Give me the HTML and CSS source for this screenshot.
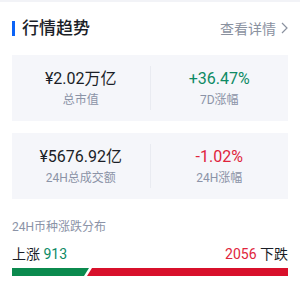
FILE: index.html
```html
<!DOCTYPE html>
<html>
<head>
	<meta charset="utf-8"/>
	<title>行情趋势</title>
	<link rel="stylesheet" href="styles.css">
</head>
<body>
<div class="topline"></div>
<div class="market">
	<div class="heading">
		<h3 class="title">行情趋势</h3>
		<a class="more" href="#">查看详情 <span class="chev"><svg width="7" height="12" viewBox="0 0 7 12"><path d="M1 1l5 5-5 5" fill="none" stroke="#8a919f" stroke-width="1.2"/></svg></span></a>
	</div>

	<div class="card">
		<div class="cell">
			<div class="val">¥2.02万亿</div>
			<div class="lbl">总市值</div>
		</div>
		<div class="sep"></div>
		<div class="cell">
			<div class="val up">+36.47%</div>
			<div class="lbl">7D涨幅</div>
		</div>
	</div>

	<div class="card">
		<div class="cell">
			<div class="val">¥5676.92亿</div>
			<div class="lbl">24H总成交额</div>
		</div>
		<div class="sep"></div>
		<div class="cell">
			<div class="val down">-1.02%</div>
			<div class="lbl">24H涨幅</div>
		</div>
	</div>

	<div class="dist">24H币种涨跌分布</div>
	<div class="counts">
		<span>上涨 <em class="up">913</em></span>
		<span><em class="down">2056</em> 下跌</span>
	</div>
	<div class="bar">
		<div class="bgreen" style="width: 77px;"></div>
		<div class="bred"></div>
	</div>
</div>
</body>
</html>
```

FILE: styles.css
```css
body{
	margin: 0;
	background: #fff;
	font-family: "Roboto", "Noto Sans CJK SC", sans-serif;
	color: #1b1e27;
}
.topline{
	height: 2px;
	background: #f2f3f7;
}
.market{
	padding: 0 12px;
}
.heading{
	display: flex;
	justify-content: space-between;
	align-items: center;
	margin-top: 14px;
	height: 24px;
}
.title{
	margin: 0;
	font-size: 17px;
	font-weight: 500;
	line-height: 24px;
	border-left: 3px solid #0b63f6;
	padding-left: 7px;
	height: 15px;
	display: flex;
	align-items: center;
}
.more{
	color: #8a919f;
	font-size: 14px;
	text-decoration: none;
	display: flex;
	align-items: center;
}
.chev{
	margin-left: 5px;
	display: flex;
}
.card{
	display: grid;
	grid-template-columns: 1fr 1px 1fr;
	align-items: center;
	height: 66px;
	background: #f5f6fa;
	margin-top: 15px;
}
.card + .card{
	margin-top: 12px;
}
.sep{
	height: 44px;
	background: #e9ebf1;
}
.cell{
	text-align: center;
}
.val{
	font-size: 16px;
	line-height: 22px;
}
.lbl{
	font-size: 12px;
	line-height: 17px;
	margin-top: 2px;
	color: #8b93a7;
}
.up{
	color: #0d8a64;
}
.down{
	color: #e0243c;
}
em{
	font-style: normal;
}
.dist{
	margin-top: 20px;
	font-size: 12px;
	line-height: 17px;
	color: #8b93a7;
}
.counts{
	display: flex;
	justify-content: space-between;
	margin-top: 8px;
	font-size: 14px;
	line-height: 20px;
	color: #1b1e27;
}
.bar{
	display: flex;
	height: 8px;
	margin-top: 4px;
}
.bgreen{
	background: #0b8a4e;
	clip-path: polygon(0 0, 100% 0, calc(100% - 5px) 100%, 0 100%);
}
.bred{
	flex: 1;
	margin-left: -2px;
	background: #d8102b;
	clip-path: polygon(5px 0, 100% 0, 100% 100%, 0 100%);
}
```
